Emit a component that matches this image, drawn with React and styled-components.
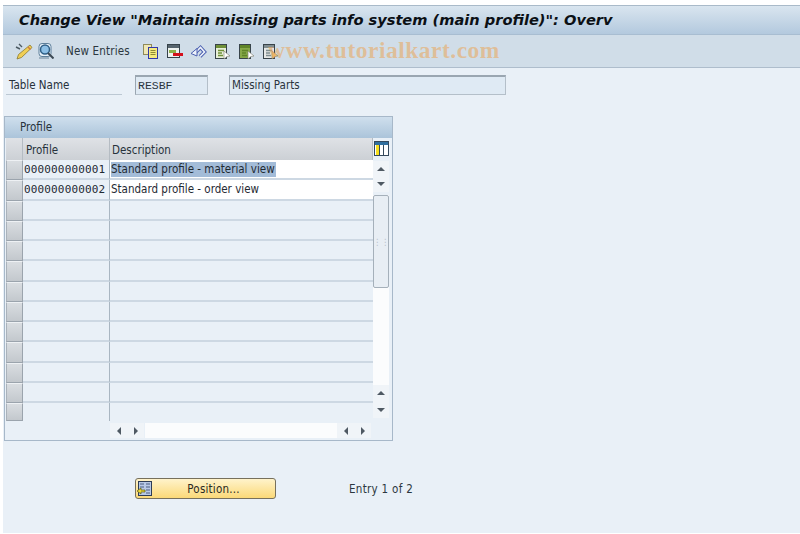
import styled, { createGlobalStyle } from "styled-components";

const GlobalStyle = createGlobalStyle`
  html, body {
    margin: 0;
    padding: 0;
    background: #fff;
  }
`;

const uiFont = `"DejaVu Sans Condensed", "DejaVu Sans", sans-serif`;
const monoFont = `"DejaVu Sans Mono", monospace`;

const Screen = styled.div`
  width: 797px;
  height: 528px;
  margin: 5px 0 0 3px;
  background: #e9f0f7;
  display: flex;
  flex-direction: column;
  font-family: ${uiFont};
  font-size: 11.5px;
  color: #1f2a33;
  overflow: hidden;
`;

const TitleBar = styled.div`
  height: 30px;
  flex: none;
  box-sizing: border-box;
  border-top: 1px solid #a9bac9;
  border-bottom: 1px solid #a8bdd1;
  background: linear-gradient(#d9e5ef, #b3c9de);
  padding: 0 0 2px 16px;
  display: flex;
  align-items: center;
  font-family: "DejaVu Sans", sans-serif;
  font-size: 14.6px;
  font-weight: 700;
  font-style: italic;
  color: #0b1015;
  white-space: nowrap;
`;

const Toolbar = styled.div`
  position: relative;
  height: 33px;
  flex: none;
  box-sizing: border-box;
  background: #d0dde8;
  border-bottom: 1px solid #aebdcc;
  padding-left: 12px;
  display: flex;
  align-items: center;
`;

const ToolIcon = styled.svg`
  width: ${(props) => props.$size || 17}px;
  height: ${(props) => props.$size || 17}px;
  flex: none;
  margin-right: ${(props) => props.$gap || 7}px;
`;

const ToolText = styled.span`
  margin: 0 12px 0 11px;
  letter-spacing: 0.18px;
  color: #2c3740;
`;

const Watermark = styled.div`
  position: absolute;
  left: 265px;
  top: 2px;
  font-family: "Liberation Serif", serif;
  font-size: 23.5px;
  font-weight: 700;
  letter-spacing: 0.5px;
  color: rgba(232, 170, 100, 0.6);
  white-space: nowrap;
`;

const FormRow = styled.div`
  margin-top: 7px;
  height: 20px;
  flex: none;
  display: flex;
  align-items: stretch;
`;

const FieldLabel = styled.div`
  width: 116px;
  margin: 0 13px 0 3px;
  padding-left: 3px;
  box-sizing: border-box;
  border-bottom: 1px solid #bcc8d3;
  display: flex;
  align-items: center;
  color: #26313a;
`;

const ReadonlyField = styled.div`
  width: ${(props) => props.$width}px;
  margin-right: ${(props) => props.$gap || 0}px;
  box-sizing: border-box;
  background: #dfeaf4;
  border: 1px solid #b4bfc9;
  border-top: 2px solid #9aa6b1;
  border-left-color: #9aa6b1;
  padding: 0 0 1px 2px;
  display: flex;
  align-items: center;
  font-family: ${(props) => (props.$mono ? `"Liberation Mono", monospace` : uiFont)};
  font-size: 11.5px;
  color: #2a343d;
`;

const TablePanel = styled.div`
  margin: 21px 0 0 1px;
  width: 389px;
  height: 325px;
  flex: none;
  box-sizing: border-box;
  border: 1px solid #a7b8c9;
  display: flex;
  flex-direction: column;
`;

const PanelTitle = styled.div`
  height: 21px;
  flex: none;
  box-sizing: border-box;
  padding: 0 0 1px 15px;
  background: linear-gradient(#cfdfed, #abc4da);
  display: flex;
  align-items: center;
  color: #27323b;
`;

const TableBody = styled.div`
  display: flex;
  padding-left: 1px;
`;

const GridArea = styled.div`
  width: 367px;
  display: grid;
  grid-template-columns: 17px 87px 263px;
  grid-template-rows: 22px repeat(12, 20.27px) 18px;
`;

const HeaderCell = styled.div`
  box-sizing: border-box;
  background: linear-gradient(#dfe2e6, #ccd0d5);
  border-right: 1px solid #b5bcc3;
  padding: 1px 0 0 ${(props) => props.$pad || 0}px;
  display: flex;
  align-items: center;
  color: #27323b;
`;

const RowHandle = styled.div`
  background: linear-gradient(#d9dde1, #c3c8cd);
  border: 1px solid #9ba4ad;
  border-top-color: #eef1f4;
  border-left-color: #aab2ba;
  box-sizing: border-box;
`;

const Cell = styled.div`
  box-sizing: border-box;
  border-bottom: ${(props) => (props.$last ? "none" : "2px solid #cdd8e3")};
  border-right: ${(props) => (props.$key ? "1px solid #a9b6c2" : "none")};
  background: ${(props) => (props.$filled ? "#fff" : "transparent")};
  padding-left: 1px;
  display: flex;
  align-items: center;
  font-family: ${(props) => (props.$key ? monoFont : uiFont)};
  font-size: ${(props) => (props.$key ? "11px" : "11.5px")};
  letter-spacing: ${(props) => (props.$key ? "0.15px" : "0")};
  white-space: nowrap;
  color: #1f2a33;
`;

const Selected = styled.span`
  background: #a3bcd8;
  padding-right: 1px;
  line-height: 15px;
`;

const ScrollColumn = styled.div`
  width: 16px;
  display: flex;
  flex-direction: column;
  align-items: center;
`;

const ColumnsButton = styled.svg`
  width: 15px;
  height: 15px;
  margin: 3px 0 5px;
  flex: none;
`;

const ArrowButton = styled.div`
  width: ${(props) => props.$w || 16}px;
  height: ${(props) => props.$h || 16}px;
  flex: none;
  background: #f0f4f8;
  display: flex;
  align-items: center;
  justify-content: center;
`;

const Arrow = styled.div`
  width: 0;
  height: 0;
  border-left: ${(props) => (props.$dir === "left" ? "0" : props.$dir === "right" ? "4px solid #4f5963" : "4.5px solid transparent")};
  border-right: ${(props) => (props.$dir === "right" ? "0" : props.$dir === "left" ? "4px solid #4f5963" : "4.5px solid transparent")};
  border-top: ${(props) => (props.$dir === "up" ? "0" : props.$dir === "down" ? "4px solid #4f5963" : "4.5px solid transparent")};
  border-bottom: ${(props) => (props.$dir === "down" ? "0" : props.$dir === "up" ? "4px solid #4f5963" : "4.5px solid transparent")};
`;

const ThumbTrack = styled.div`
  width: 16px;
  height: 190px;
  flex: none;
  margin-top: 3px;
  background: #fbfcfd;
  display: flex;
  flex-direction: column;
`;

const Thumb = styled.div`
  height: 93px;
  box-sizing: border-box;
  border: 1px solid #a5b0ba;
  border-radius: 2px;
  background: #e8eef4;
  display: flex;
  align-items: center;
  justify-content: center;
  color: #b8c2cc;
  font-size: 9px;
`;

const HScroll = styled.div`
  margin: 1px 0 0 105px;
  height: 17px;
  display: flex;
  align-items: center;
`;

const HTrack = styled.div`
  width: 192px;
  height: 15px;
  margin-left: 1px;
  background: #fbfcfd;
`;

const Footer = styled.div`
  margin: 37px 0 0 132px;
  display: flex;
  align-items: center;
`;

const PositionButton = styled.button`
  width: 141px;
  height: 21px;
  box-sizing: border-box;
  padding: 0 0 0 1px;
  border: 1px solid #77705c;
  border-radius: 3px;
  background: linear-gradient(#fff3cb, #fbd978);
  display: flex;
  align-items: center;
  font-family: ${uiFont};
  font-size: 11.5px;
  color: #2b2a22;
`;

const ButtonLabel = styled.span`
  flex: 1;
  text-align: center;
  letter-spacing: 0.2px;
`;

const EntryText = styled.div`
  margin-left: 73px;
  letter-spacing: 0.3px;
  color: #2c3740;
`;

const rowData = [
  ["000000000001", "Standard profile - material view"],
  ["000000000002", "Standard profile - order view"],
  ...Array.from({ length: 11 }, () => ["", ""]),
];

function PencilIcon() {
  return (
    <ToolIcon viewBox="0 0 18 18" $size={18} $gap={5}>
      <path d="M4 2 l3 3 M1 5 l4 2" stroke="#4c5a63" strokeWidth="1.4" fill="none" />
      <path d="M15 3 L17 5.5 L6.5 15.5 L2 17 L3.5 12.5 Z" fill="#f0cf55" stroke="#8a7a30" strokeWidth="0.8" />
      <path d="M13 5 L15.5 7.5" stroke="#d17a40" strokeWidth="1.4" />
    </ToolIcon>
  );
}

function LensIcon() {
  return (
    <ToolIcon viewBox="0 0 16 16" $size={16} $gap={1}>
      <rect x="1" y="0.5" width="12" height="13" fill="#e8f2fa" stroke="#5d7f9a" rx="3" />
      <circle cx="7" cy="6.5" r="4.5" fill="#8dc0e6" stroke="#2f5f86" strokeWidth="1.5" />
      <path d="M10 10 L15.5 15.5" stroke="#3d4a55" strokeWidth="2" />
      <path d="M1 15 H11" stroke="#6d8599" />
    </ToolIcon>
  );
}

function CopyIcon() {
  return (
    <ToolIcon viewBox="0 0 17 17">
      <rect x="1.5" y="1.5" width="8" height="10" fill="#efe7b5" stroke="#8f8a5a" />
      <rect x="6.5" y="4.5" width="9" height="11" fill="#f6ea7d" stroke="#3238a8" />
      <path d="M8.5 7.5 H13.5 M8.5 9.5 H13.5 M8.5 11.5 H13.5" stroke="#8f8a35" />
    </ToolIcon>
  );
}

function DeleteIcon() {
  return (
    <ToolIcon viewBox="0 0 17 17">
      <rect x="1.5" y="1.5" width="12" height="13" fill="#eef2f0" stroke="#36424a" />
      <rect x="2" y="2" width="11" height="3" fill="#56646e" />
      <rect x="3" y="7" width="7" height="3" fill="#8eb04a" />
      <rect x="7" y="10" width="10" height="3" fill="#d4101c" />
    </ToolIcon>
  );
}

function UndoIcon() {
  return (
    <ToolIcon viewBox="0 0 17 17">
      <path d="M6 9 L10.5 4.5 L14.5 9 L10 13.5" fill="none" stroke="#4a5fb0" strokeWidth="3.6" />
      <path d="M6 9 L10.5 4.5 L14.5 9 L10 13.5" fill="none" stroke="#eef3fb" strokeWidth="1.6" />
      <path d="M1 10.5 L7 5.5 V13 Z" fill="#eef3fb" stroke="#4a5fb0" strokeLinejoin="round" />
    </ToolIcon>
  );
}

function SheetIcon({ fill, body, arrow }) {
  return (
    <ToolIcon viewBox="0 0 17 17">
      <rect x="1.5" y="1.5" width="11" height="14" fill={body} stroke="#38444a" />
      <rect x="2" y="2" width="10" height="3" fill={fill} />
      <path d="M4 7.5 H10 M4 10 H8 M4 12.5 H9" stroke={fill} strokeWidth="1.4" />
      <path d="M10 8 L16 13 L13 13.5 L10 16 Z" fill={arrow} stroke="#7a7a6a" strokeWidth="0.6" />
    </ToolIcon>
  );
}

function ColumnsIcon() {
  return (
    <ColumnsButton viewBox="0 0 15 15">
      <rect x="0.5" y="0.5" width="14" height="14" fill="#fff" stroke="#34495c" />
      <rect x="1" y="1" width="13" height="3" fill="#2f6f9f" />
      <rect x="2" y="4" width="3" height="10" fill="#f7df1e" />
      <path d="M5.5 4 V14 M9.5 4 V14" stroke="#34495c" />
    </ColumnsButton>
  );
}

function PositionIcon() {
  return (
    <svg width="15" height="15" viewBox="0 0 15 15" style={{ flex: "none" }}>
      <rect x="1.5" y="0.5" width="13" height="14" fill="#b8c9e6" stroke="#2d3c55" />
      <path d="M3 3 H7 M3 6 H7 M9 3 H13 M9 6 H13 M9 9 H13 M9 12 H13" stroke="#4c5f80" />
      <path d="M0 10 L4 7 V9 H8 V11 H4 V13 Z" fill="#ecd93a" stroke="#5d5a10" strokeWidth="0.7" />
    </svg>
  );
}

function Row({ profile, description, index, last }) {
  return (
    <>
      <RowHandle />
      <Cell $key $last={last}>
        {profile}
      </Cell>
      <Cell $filled={index < 2} $last={last}>
        {index === 0 ? <Selected>{description}</Selected> : description}
      </Cell>
    </>
  );
}

function App() {
  return (
    <>
      <GlobalStyle />
      <Screen>
        <TitleBar>Change View "Maintain missing parts info system (main profile)": Overv</TitleBar>
        <Toolbar>
          <PencilIcon />
          <LensIcon />
          <ToolText>New Entries</ToolText>
          <CopyIcon />
          <DeleteIcon />
          <UndoIcon />
          <SheetIcon fill="#6f9038" body="#e7efd8" arrow="#fff" />
          <SheetIcon fill="#5f8428" body="#86a848" arrow="#fff" />
          <SheetIcon fill="#7f8c90" body="#e6e8e6" arrow="#f2c468" />
          <Watermark>www.tutorialkart.com</Watermark>
        </Toolbar>
        <FormRow>
          <FieldLabel>Table Name</FieldLabel>
          <ReadonlyField $width={73} $gap={21} $mono>
            RESBF
          </ReadonlyField>
          <ReadonlyField $width={277}>Missing Parts</ReadonlyField>
        </FormRow>
        <TablePanel>
          <PanelTitle>Profile</PanelTitle>
          <TableBody>
            <GridArea>
              <HeaderCell />
              <HeaderCell $pad={3}>Profile</HeaderCell>
              <HeaderCell $pad={2}>Description</HeaderCell>
              {rowData.map(([profile, description], index) => (
                <Row
                  key={index}
                  profile={profile}
                  description={description}
                  index={index}
                  last={index === rowData.length - 1}
                />
              ))}
            </GridArea>
            <ScrollColumn>
              <ColumnsIcon />
              <ArrowButton $h={15}>
                <Arrow $dir="up" />
              </ArrowButton>
              <ArrowButton>
                <Arrow $dir="down" />
              </ArrowButton>
              <ThumbTrack>
                <Thumb>⋮⋮</Thumb>
              </ThumbTrack>
              <ArrowButton>
                <Arrow $dir="up" />
              </ArrowButton>
              <ArrowButton $h={17}>
                <Arrow $dir="down" />
              </ArrowButton>
            </ScrollColumn>
          </TableBody>
          <HScroll>
            <ArrowButton $w={17} $h={15}>
              <Arrow $dir="left" />
            </ArrowButton>
            <ArrowButton $w={17} $h={15}>
              <Arrow $dir="right" />
            </ArrowButton>
            <HTrack />
            <ArrowButton $w={17} $h={15}>
              <Arrow $dir="left" />
            </ArrowButton>
            <ArrowButton $w={17} $h={15}>
              <Arrow $dir="right" />
            </ArrowButton>
          </HScroll>
        </TablePanel>
        <Footer>
          <PositionButton>
            <PositionIcon />
            <ButtonLabel>Position...</ButtonLabel>
          </PositionButton>
          <EntryText>Entry 1 of 2</EntryText>
        </Footer>
      </Screen>
    </>
  );
}

export default App;
